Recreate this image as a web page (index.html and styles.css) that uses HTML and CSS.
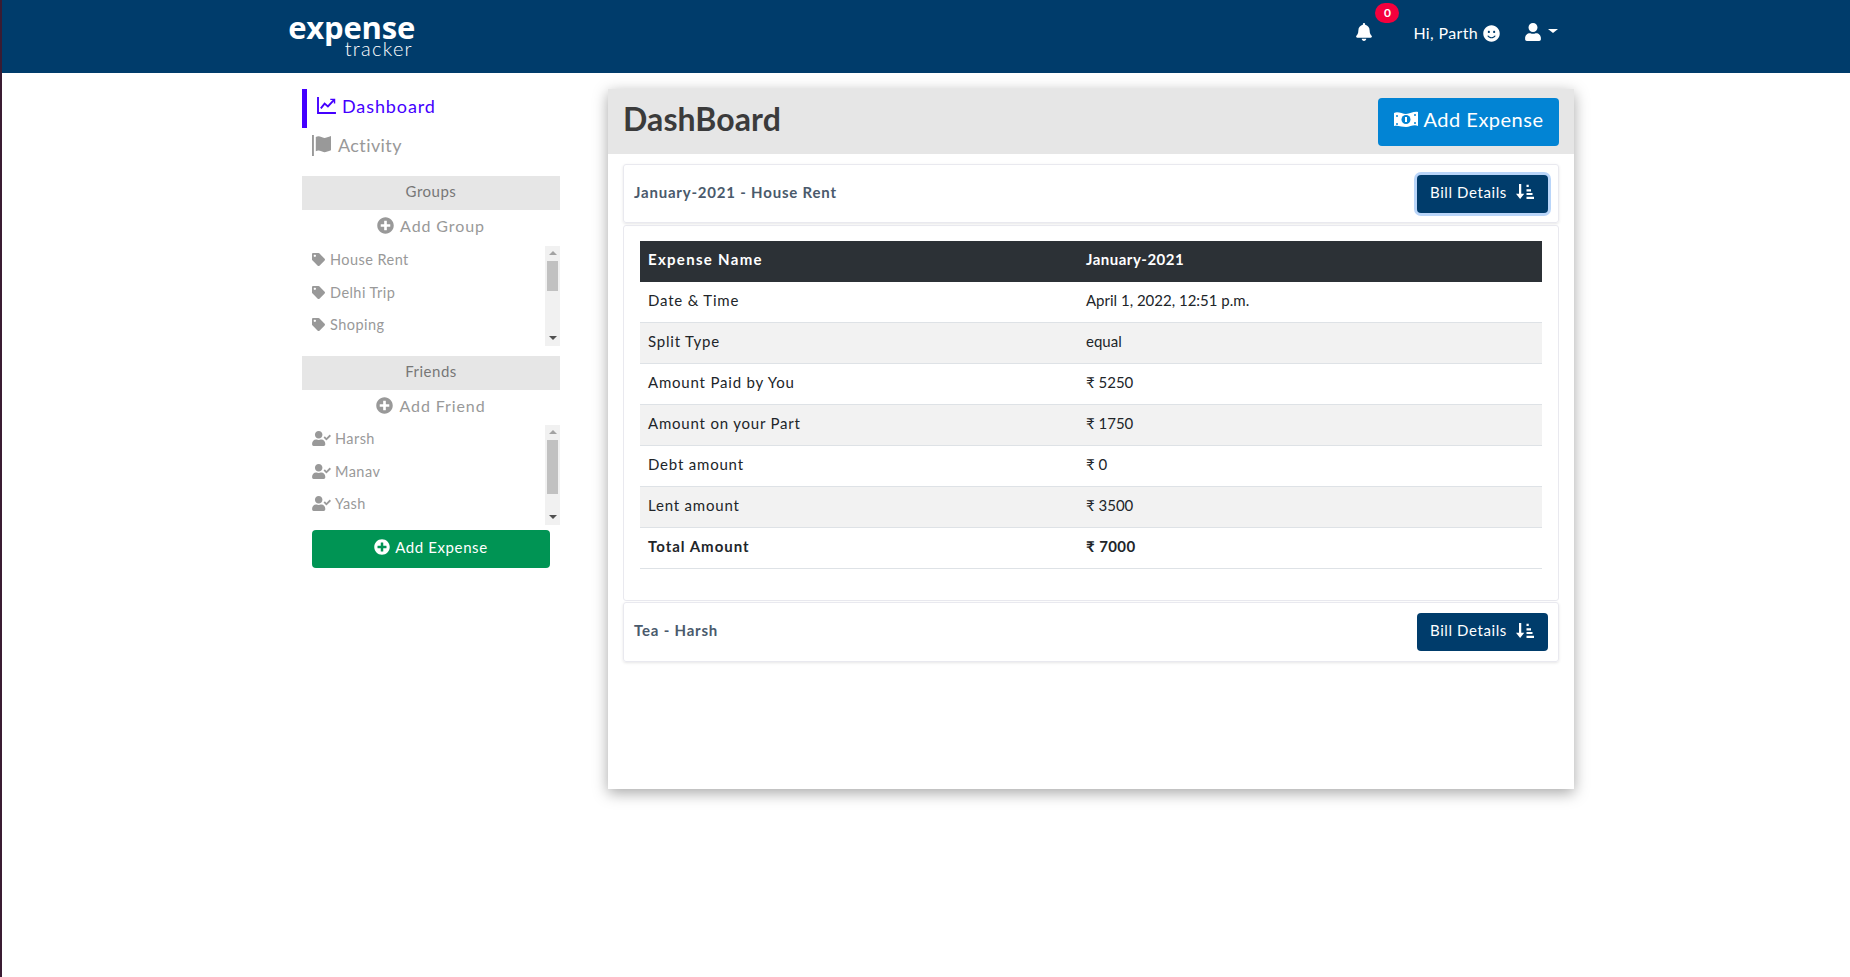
FILE: index.html
```html
<!DOCTYPE html>
<html lang="en">
  <head>
    <meta charset="UTF-8" />
    <meta name="viewport" content="width=device-width, initial-scale=1.0" />
    <title>Expense Tracker</title>
    <link rel="stylesheet" href="styles.css">
  </head>
  <body>
    <svg class="sprite" xmlns="http://www.w3.org/2000/svg">
      <symbol id="i-plus" viewBox="0 0 512 512"><path d="M256 8C119 8 8 119 8 256s111 248 248 248 248-111 248-248S393 8 256 8zm144 276c0 6.6-5.4 12-12 12h-92v92c0 6.6-5.4 12-12 12h-56c-6.6 0-12-5.4-12-12v-92h-92c-6.6 0-12-5.4-12-12v-56c0-6.6 5.4-12 12-12h92v-92c0-6.6 5.4-12 12-12h56c6.6 0 12 5.4 12 12v92h92c6.6 0 12 5.4 12 12v56z"/></symbol>
      <symbol id="i-tag" viewBox="0 0 512 512"><path d="M0 252.118V48C0 21.49 21.49 0 48 0h204.118a48 48 0 0 1 33.941 14.059l211.882 211.882c18.745 18.745 18.745 49.137 0 67.882L293.823 497.941c-18.745 18.745-49.137 18.745-67.882 0L14.059 286.059A48 48 0 0 1 0 252.118zM112 64c-26.51 0-48 21.49-48 48s21.49 48 48 48 48-21.49 48-48-21.49-48-48-48z"/></symbol>
      <symbol id="i-user-check" viewBox="0 0 640 512"><path d="M224 256c70.7 0 128-57.3 128-128S294.7 0 224 0 96 57.3 96 128s57.3 128 128 128zm89.6 32h-16.7c-22.2 10.2-46.9 16-72.9 16s-50.6-5.8-72.9-16h-16.7C60.2 288 0 348.2 0 422.4V464c0 26.5 21.5 48 48 48h352c26.5 0 48-21.5 48-48v-41.6c0-74.2-60.2-134.4-134.4-134.4zm323-128.4l-27.8-28.1c-4.6-4.7-12.1-4.7-16.8-.1l-104.8 104-45.5-45.8c-4.6-4.7-12.1-4.7-16.8-.1l-28.1 27.9c-4.7 4.6-4.7 12.1-.1 16.8l81.7 82.3c4.6 4.7 12.1 4.7 16.8.1l141.3-140.2c4.6-4.7 4.7-12.2.1-16.8z"/></symbol>
      <symbol id="i-sort" viewBox="0 0 24 20"><path d="M4 0h3v13h4l-5.5 7L0 13h4zM14 1h3v3h-3zM14 7h6v3h-6zM14 12h8v2.500h-8zM14 17h10v3H14z"/></symbol>
    </svg>

    <nav class="navbar">
      <a class="logo">
        <span class="logo-top">expense</span>
        <span class="logo-bottom">tracker</span>
      </a>
      <div class="nav-right">
        <span class="bell">
          <svg class="icon-bell" viewBox="0 0 448 512" fill="currentColor"><path d="M224 512c35.32 0 63.97-28.65 63.97-64H160.03c0 35.35 28.65 64 63.97 64zm215.39-149.71c-19.32-20.76-55.47-51.99-55.47-154.29 0-77.7-54.48-139.9-127.94-155.16V32c0-17.67-14.32-32-31.98-32s-31.98 14.33-31.98 32v20.84C118.56 68.1 64.08 130.3 64.08 208c0 102.3-36.15 133.53-55.47 154.29-6 6.45-8.66 14.16-8.61 21.71.11 16.4 12.98 32 32.1 32h383.8c19.12 0 32-15.6 32.1-32 .05-7.55-2.61-15.27-8.61-21.71z"/></svg>
          <span class="badge">0</span>
        </span>
        <span class="greeting">
          Hi, Parth
          <svg class="icon-smile" viewBox="0 0 496 512" fill="currentColor"><path d="M248 8C111 8 0 119 0 256s111 248 248 248 248-111 248-248S385 8 248 8zm80 168c17.7 0 32 14.3 32 32s-14.3 32-32 32-32-14.3-32-32 14.3-32 32-32zm-160 0c17.7 0 32 14.3 32 32s-14.3 32-32 32-32-14.3-32-32 14.3-32 32-32zm194.8 170.2C334.3 380.4 292.5 400 248 400s-86.3-19.6-114.8-53.8c-13.6-16.3 11-36.7 24.6-20.5 22.4 26.9 55.2 42.2 90.2 42.2s67.8-15.4 90.2-42.2c13.4-16.2 38.1 4.2 24.6 20.5z"/></svg>
        </span>
        <span class="user-menu">
          <svg class="icon-user" viewBox="0 0 448 512" fill="currentColor"><path d="M224 256c70.7 0 128-57.3 128-128S294.7 0 224 0 96 57.3 96 128s57.3 128 128 128zm89.6 32h-16.7c-22.2 10.2-46.9 16-72.9 16s-50.6-5.800-72.9-16h-16.7C60.2 288 0 348.2 0 422.4V464c0 26.5 21.5 48 48 48h352c26.5 0 48-21.5 48-48v-41.6c0-74.2-60.2-134.4-134.4-134.4z"/></svg>
          <span class="caret"></span>
        </span>
      </div>
    </nav>

    <div class="layout">
      <aside class="sidebar">
        <a class="side-link active">
          <svg class="icon-chart" viewBox="0 0 20 18" fill="none" stroke="currentColor" stroke-width="2"><path d="M1 0v17h19"/><path d="M4 12l4-5 3.500 3L18 3"/><path d="M14 2.500h4.500V7" stroke-width="1.500"/></svg>
          Dashboard
        </a>
        <a class="side-link">
          <svg class="icon-flag" viewBox="0 0 20 22" fill="currentColor"><path d="M0 0h2v22H0zM4 2c4-2 6 1 9 1 2 0 4-1 7-2v15c-3 1-5 2-7 2-3 0-5-3-9-1z"/></svg>
          Activity
        </a>

        <div class="side-heading">Groups</div>
        <a class="side-add"><svg class="icon-plus"><use href="#i-plus" /></svg>Add Group</a>
        <div class="side-scroll">
          <ul class="side-list">
            <li><svg class="icon-tag"><use href="#i-tag" /></svg>House Rent</li>
            <li><svg class="icon-tag"><use href="#i-tag" /></svg>Delhi Trip</li>
            <li><svg class="icon-tag"><use href="#i-tag" /></svg>Shoping</li>
          </ul>
          <div class="scrollbar">
            <span class="arrow-up"></span>
            <div class="track"><div class="thumb thumb-groups"></div></div>
            <span class="arrow-down"></span>
          </div>
        </div>

        <div class="side-heading friends-heading">Friends</div>
        <a class="side-add friends-add"><svg class="icon-plus"><use href="#i-plus" /></svg>Add Friend</a>
        <div class="side-scroll">
          <ul class="side-list">
            <li><svg class="icon-friend"><use href="#i-user-check" /></svg>Harsh</li>
            <li><svg class="icon-friend"><use href="#i-user-check" /></svg>Manav</li>
            <li><svg class="icon-friend"><use href="#i-user-check" /></svg>Yash</li>
          </ul>
          <div class="scrollbar">
            <span class="arrow-up"></span>
            <div class="track"><div class="thumb thumb-friends"></div></div>
            <span class="arrow-down"></span>
          </div>
        </div>

        <a class="btn-green"><svg class="icon-plus-white"><use href="#i-plus" /></svg>Add Expense</a>
      </aside>

      <main class="panel">
        <div class="panel-head">
          <h1 class="panel-title">DashBoard</h1>
          <a class="btn-blue">
            <svg class="icon-money" viewBox="0 0 24 18">
              <path fill="#fff" d="M0 3c4-2 8 1 12 1s8-3 12-2v14c-4-2-8 1-12 1s-8-2-12-1z"/>
              <circle cx="12" cy="9.500" r="4.500" fill="#0284d4"/>
              <rect x="11" y="7" width="2" height="5" fill="#fff"/>
              <circle cx="3" cy="6" r="1" fill="#0284d4"/>
              <circle cx="21" cy="5" r="1" fill="#0284d4"/>
              <circle cx="3" cy="14" r="1" fill="#0284d4"/>
              <circle cx="21" cy="13" r="1" fill="#0284d4"/>
            </svg>
            Add Expense
          </a>
        </div>

        <div class="panel-body">
          <div class="bill-head">
            <span class="bill-name">January-2021 - House Rent</span>
            <a class="btn-bill focused">Bill Details <svg class="icon-sort"><use href="#i-sort" /></svg></a>
          </div>
          <div class="bill-body">
            <table class="bill-table">
              <thead>
                <tr><th>Expense Name</th><th>January-2021</th></tr>
              </thead>
              <tbody>
                <tr><td>Date &amp; Time</td><td>April 1, 2022, 12:51 p.m.</td></tr>
                <tr><td>Split Type</td><td>equal</td></tr>
                <tr><td>Amount Paid by You</td><td>₹ 5250</td></tr>
                <tr><td>Amount on your Part</td><td>₹ 1750</td></tr>
                <tr><td>Debt amount</td><td>₹ 0</td></tr>
                <tr><td>Lent amount</td><td>₹ 3500</td></tr>
                <tr class="total"><td>Total Amount</td><td>₹ 7000</td></tr>
              </tbody>
            </table>
          </div>
          <div class="bill-head last">
            <span class="bill-name">Tea - Harsh</span>
            <a class="btn-bill">Bill Details <svg class="icon-sort"><use href="#i-sort" /></svg></a>
          </div>
        </div>
      </main>
    </div>
  </body>
</html>
```

FILE: styles.css
```css
* {
  margin: 0;
  padding: 0;
  box-sizing: border-box;
}

body {
  font-family: Lato, "Noto Sans", sans-serif;
  background: #fff;
  color: #212529;
  border-left: 2px solid #3a1c33;
  min-height: 977px;
}

.sprite {
  display: none;
}

.navbar {
  height: 73px;
  background: #003c6b;
  color: #fff;
  display: flex;
  justify-content: space-between;
  padding: 0 292px 0 287px;
}

.logo {
  display: flex;
  flex-direction: column;
  align-items: flex-end;
  width: 126px;
  padding-top: 14px;
}

.logo-top {
  font-family: "Open Sans", sans-serif;
  font-size: 31px;
  font-weight: 700;
  line-height: 27px;
  letter-spacing: -0.2px;
}

.logo-bottom {
  font-size: 20px;
  font-weight: 300;
  line-height: 15px;
  letter-spacing: 1.3px;
  margin-right: 2px;
}

.nav-right {
  display: flex;
  align-items: flex-start;
}

.bell {
  position: relative;
  display: block;
  margin-top: 23px;
  margin-right: 41px;
}

.icon-bell {
  display: block;
  width: 16px;
  height: 18px;
}

.badge {
  position: absolute;
  left: 19px;
  top: -20px;
  width: 24px;
  height: 20px;
  border-radius: 10px;
  background: #f5003d;
  font-size: 12px;
  font-weight: 700;
  line-height: 19px;
  text-align: center;
}

.greeting {
  display: flex;
  align-items: center;
  gap: 5px;
  margin-top: 23px;
  font-size: 16px;
  line-height: 20px;
  letter-spacing: 0.35px;
  margin-right: 25px;
}

.icon-smile {
  width: 17px;
  height: 17px;
}

.user-menu {
  display: flex;
  align-items: center;
  gap: 7px;
  margin-top: 23px;
}

.icon-user {
  display: block;
  width: 16px;
  height: 18px;
}

.caret {
  border-top: 4px solid #fff;
  border-left: 5px solid transparent;
  border-right: 5px solid transparent;
  margin-bottom: 2px;
}

.layout {
  display: flex;
  align-items: flex-start;
  padding-left: 300px;
}

.sidebar {
  width: 258px;
  padding-top: 16px;
  color: #999;
}

.side-link {
  display: flex;
  align-items: center;
  height: 39px;
  padding: 0 0 5px 10px;
  gap: 7px;
  font-size: 18px;
  letter-spacing: 0.4px;
  color: #999;
}

.side-link.active {
  color: #4400ff;
  border-left: 5px solid #4400ff;
  padding: 0 0 6px 10px;
  gap: 6px;
  letter-spacing: 0.9px;
}

.icon-chart {
  width: 19px;
  height: 17px;
}

.icon-flag {
  width: 19px;
  height: 21px;
}

.side-heading {
  height: 34px;
  margin-top: 9px;
  background: #e6e6e6;
  color: #777;
  font-size: 15px;
  line-height: 31px;
  letter-spacing: 0.5px;
  text-align: center;
}

.friends-heading {
  margin-top: 10px;
}

.side-add {
  display: flex;
  align-items: center;
  justify-content: center;
  gap: 6px;
  height: 36px;
  padding-bottom: 5px;
  font-size: 16px;
  letter-spacing: 0.9px;
}

.friends-add {
  height: 35px;
}

.icon-plus {
  width: 17px;
  height: 17px;
  fill: #999;
}

.side-scroll {
  display: flex;
  height: 100px;
}

.side-list {
  flex: 1;
  list-style: none;
  font-size: 14.500px;
  letter-spacing: 0.45px;
}

.side-list li {
  display: flex;
  align-items: center;
  height: 32.500px;
  padding: 0 0 5px 10px;
  gap: 5px;
  color: #999;
}

/* headless chrome hides real scrollbars, so these are drawn */
.scrollbar {
  display: flex;
  flex-direction: column;
  align-items: center;
  width: 15px;
  background: #f1f1f1;
}

.track {
  flex: 1;
  width: 100%;
  padding: 0 2px;
}

.thumb {
  background: #c1c1c1;
}

.thumb-groups {
  height: 30px;
}

.thumb-friends {
  height: 54px;
}

.arrow-up,
.arrow-down {
  display: block;
  width: 0;
  height: 0;
  margin: 5px 0 6px;
  border-left: 4px solid transparent;
  border-right: 4px solid transparent;
}

.arrow-up {
  border-bottom: 4px solid #a3a3a3;
}

.arrow-down {
  border-top: 4px solid #505050;
}

.icon-tag {
  width: 13px;
  height: 13px;
  fill: #999;
}

.icon-friend {
  width: 19px;
  height: 15px;
  fill: #999;
  margin-right: -1px;
}

.btn-green {
  display: flex;
  align-items: center;
  justify-content: center;
  gap: 5px;
  width: 238px;
  height: 38px;
  margin: 5px 0 0 10px;
  padding-bottom: 4px;
  background: #009454;
  color: #fff;
  border-radius: 4px;
  font-size: 15px;
  letter-spacing: 0.6px;
}

.icon-plus-white {
  width: 16px;
  height: 16px;
  fill: #fff;
}

.panel {
  width: 966px;
  height: 700px;
  margin: 16px 0 0 48px;
  background: #fff;
  box-shadow: 0 4px 14px rgba(0, 0, 0, 0.35);
}

.panel-head {
  display: flex;
  justify-content: space-between;
  align-items: center;
  height: 65px;
  padding: 0 15px 0 15px;
  background: #e6e6e6;
}

.panel-title {
  font-size: 32px;
  font-weight: 700;
  color: #3b3b3b;
  letter-spacing: 0.1px;
  padding-bottom: 6px;
}

.btn-blue {
  display: flex;
  align-items: center;
  justify-content: center;
  gap: 6px;
  width: 181px;
  height: 48px;
  padding: 0 0 5px 0;
  background: #0284d4;
  color: #fff;
  border-radius: 4px;
  font-size: 20px;
  letter-spacing: 0.5px;
}

.icon-money {
  width: 24px;
  height: 18px;
}

.panel-body {
  padding: 10px 15px 0;
}

.bill-head {
  display: flex;
  justify-content: space-between;
  align-items: center;
  height: 59px;
  padding: 0 10px 0 10px;
  border: 1px solid #e9e9ef;
  border-radius: 3px;
  box-shadow: 0 1px 3px rgba(0, 0, 0, 0.1);
}

.bill-name {
  font-size: 15px;
  font-weight: 700;
  color: #4a5a6c;
  letter-spacing: 0.8px;
  padding-bottom: 4px;
}

.btn-bill {
  display: flex;
  align-items: center;
  gap: 9px;
  height: 38px;
  width: 131px;
  padding: 0 0 4px 13px;
  background: #003c6b;
  color: #fff;
  border-radius: 4px;
  font-size: 15px;
  letter-spacing: 0.6px;
}

.btn-bill.focused {
  box-shadow: 0 0 0 3px #b9d5f9;
}

.icon-sort {
  width: 18px;
  height: 15px;
  fill: #fff;
}

.bill-body {
  height: 376px;
  margin-top: 2px;
  padding: 15px 16px 0 16px;
  border: 1px solid #e9e9ef;
  border-radius: 3px;
}

.bill-table {
  width: 100%;
  table-layout: fixed;
  border-collapse: collapse;
  font-size: 15px;
  letter-spacing: 0.8px;
}

.bill-table th,
.bill-table td {
  height: 41px;
  padding: 0 8px 5px;
  text-align: left;
  border-bottom: 1px solid #dee2e6;
}

.bill-table td {
  padding-bottom: 3px;
}

.bill-table tbody tr:first-child td {
  height: 40px;
}

.bill-table td:last-child {
  letter-spacing: 0;
}

.bill-table th:first-child {
  width: 438px;
  letter-spacing: 1.3px;
}

.bill-table th {
  background: #2c3136;
  color: #fff;
  border-bottom: 0;
  font-weight: 700;
  letter-spacing: 0.5px;
}

.bill-table tbody tr:nth-child(even) {
  background: #f2f2f2;
}

.bill-table .total td {
  font-weight: 700;
  letter-spacing: 1px;
}

.bill-table .total td:last-child {
  letter-spacing: 0.4px;
}

.bill-head.last {
  height: 60px;
  margin-top: 1px;
}
```
